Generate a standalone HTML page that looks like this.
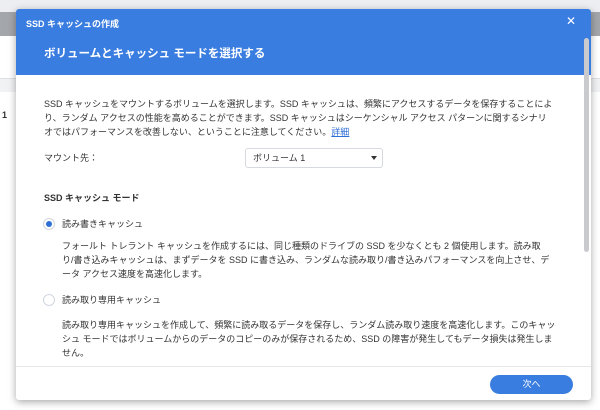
<!DOCTYPE html>
<html><head><meta charset="utf-8"><style>
*{margin:0;padding:0;box-sizing:border-box}
body{width:600px;height:410px;overflow:hidden;background:#fff;font-family:"Liberation Sans","Noto Sans CJK JP",sans-serif;position:relative;color:#333}
.abs{position:absolute}
.t{font-size:9px;line-height:14px;color:#333;white-space:nowrap}
</style></head><body>
<div class="abs" style="left:0;top:0;width:600px;height:12px;background:#eceef1"></div>
<div class="abs" style="left:0;top:12px;width:600px;height:24px;background:#a3a6aa"></div>
<div class="abs" style="left:0;top:36px;width:600px;height:42px;background:#fff"></div>
<div class="abs" style="left:0;top:78px;width:600px;height:14px;background:#f1f2f4;border-top:1px solid #dde0e3"></div>
<div class="abs" style="left:2px;top:110px;font-size:9px;font-weight:bold">1</div>
<div class="abs" style="left:16px;top:9px;width:575px;height:391px;background:#fff;box-shadow:0 2px 8px rgba(0,0,0,.35);border-radius:3px;overflow:hidden">
  <div class="abs" style="left:0;top:0;width:575px;height:66px;background:#3a7de0"></div>
  <div class="abs" style="left:10px;top:8px;color:#fff;font-size:9px;font-weight:bold">SSD キャッシュの作成</div>
  <div class="abs" style="left:550px;top:5px;color:#fff;font-size:12px">✕</div>
  <div class="abs" style="left:28px;top:36px;color:#fff;font-size:11.5px;font-weight:bold">ボリュームとキャッシュ モードを選択する</div>
  <div class="abs" style="left:568px;top:29px;width:5px;height:214px;background:#c8cacd;border-radius:3px"></div>
  <div class="abs t" style="left:28px;top:88px">SSD キャッシュをマウントするボリュームを選択します。SSD キャッシュは、頻繁にアクセスするデータを保存することによ<br>り、ランダム アクセスの性能を高めることができます。SSD キャッシュはシーケンシャル アクセス パターンに関するシナリ<br>オではパフォーマンスを改善しない、ということに注意してください。<span style="color:#2c6fd6;text-decoration:underline">詳細</span></div>
  <div class="abs t" style="left:28px;top:142px">マウント先：</div>
  <div class="abs" style="left:229px;top:139px;width:138px;height:20px;border:1px solid #d6dae0;border-radius:3px"></div>
  <div class="abs t" style="left:237px;top:142px">ボリューム 1</div>
  <div class="abs" style="left:355px;top:147px;border-left:3px solid transparent;border-right:3px solid transparent;border-top:4px solid #333"></div>
  <div class="abs t" style="left:28px;top:182px;font-weight:bold">SSD キャッシュ モード</div>
  <div class="abs" style="left:27px;top:209px;width:12px;height:12px;border-radius:50%;border:1px solid #d0d6df;background:#fff"></div>
  <div class="abs" style="left:30px;top:212px;width:6px;height:6px;border-radius:50%;background:#2c6fd6"></div>
  <div class="abs t" style="left:46px;top:208px">読み書きキャッシュ</div>
  <div class="abs t" style="left:46px;top:230px">フォールト トレラント キャッシュを作成するには、同じ種類のドライブの SSD を少なくとも 2 個使用します。読み取<br>り/書き込みキャッシュは、まずデータを SSD に書き込み、ランダムな読み取り/書き込みパフォーマンスを向上させ、デ<br>ータ アクセス速度を高速化します。</div>
  <div class="abs" style="left:27px;top:285px;width:12px;height:12px;border-radius:50%;border:1px solid #d0d6df;background:#fff"></div>
  <div class="abs t" style="left:46px;top:284px">読み取り専用キャッシュ</div>
  <div class="abs t" style="left:46px;top:309px">読み取り専用キャッシュを作成して、頻繁に読み取るデータを保存し、ランダム読み取り速度を高速化します。このキャッ<br>シュ モードではボリュームからのデータのコピーのみが保存されるため、SSD の障害が発生してもデータ損失は発生しま<br>せん。</div>
  <div class="abs" style="left:0;top:357px;width:575px;height:1px;background:#e6e8eb"></div>
  <div class="abs" style="left:474px;top:366px;width:83px;height:19px;background:#3a7de0;border-radius:10px;color:#fff;font-size:9px;line-height:19px;text-align:center">次へ</div>
</div>
</body></html>
